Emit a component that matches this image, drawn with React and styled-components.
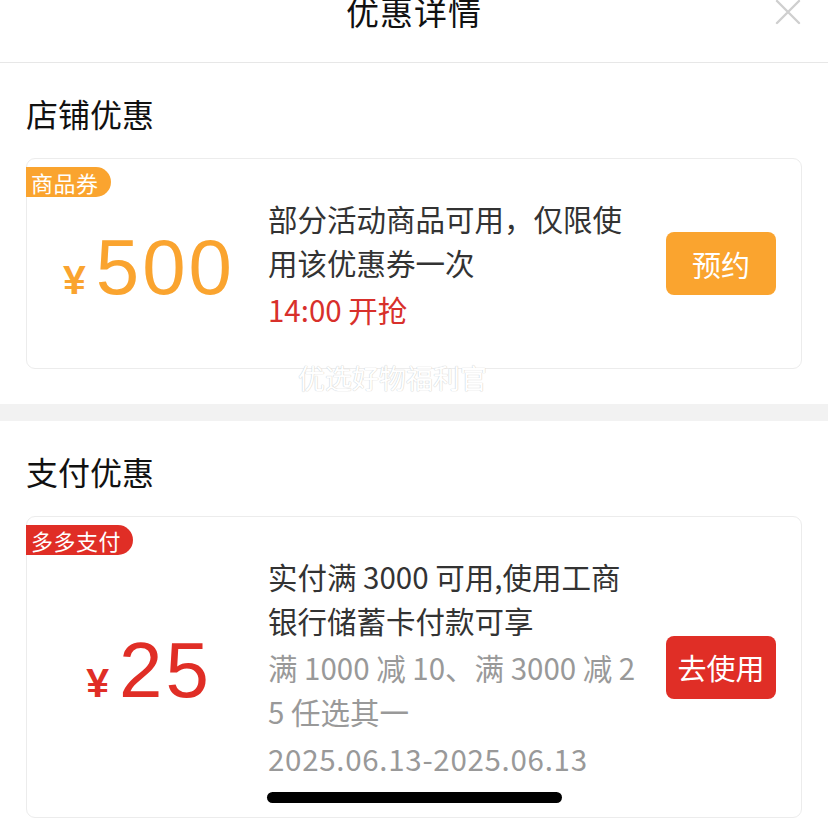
import React from "react";
import styled, { createGlobalStyle } from "styled-components";

const GlobalStyle = createGlobalStyle`
  html, body {
    margin: 0;
    padding: 0;
    background: #fff;
  }
  body {
    font-family: "Noto Sans CJK SC", "Noto Sans", sans-serif;
    color: #222;
    overflow: hidden;
  }
`;

const coupons = [
  {
    id: "shop",
    title: "店铺优惠",
    tag: "商品券",
    color: "#faa42f",
    amount: "500",
    desc: "部分活动商品可用，仅限使用该优惠券一次",
    note: "14:00 开抢",
    action: "预约",
  },
  {
    id: "pay",
    title: "支付优惠",
    tag: "多多支付",
    color: "#e02e26",
    amount: "25",
    desc: "实付满 3000 可用,使用工商银行储蓄卡付款可享",
    rule: "满 1000 减 10、满 3000 减 25 任选其一",
    date: "2025.06.13-2025.06.13",
    action: "去使用",
  },
];

export default function App() {
  return (
    <Page>
      <GlobalStyle />
      <Header>
        <span />
        <Title>优惠详情</Title>
        <Close aria-label="关闭">
          <svg width="26" height="26" viewBox="0 0 26 26">
            <path d="M2 2 L24 24 M24 2 L2 24" stroke="#cfcfcf" strokeWidth="2.4" strokeLinecap="round" />
          </svg>
        </Close>
      </Header>

      {coupons.map((c, i) => (
        <React.Fragment key={c.id}>
          {i > 0 && <Band />}
          <Section>
            <SectionTitle>{c.title}</SectionTitle>
            <Card>
              <Tag $color={c.color}>{c.tag}</Tag>
              <Price $color={c.color}>
                <Yen>¥</Yen>
                <Amount>{c.amount}</Amount>
              </Price>
              <Info>
                <Desc>{c.desc}</Desc>
                {c.note && <Note>{c.note}</Note>}
                {c.rule && <Muted>{c.rule}</Muted>}
                {c.date && <DateText>{c.date}</DateText>}
              </Info>
              <ActionButton $color={c.color}>{c.action}</ActionButton>
            </Card>
            {i === 0 && <Watermark>优选好物福利官</Watermark>}
          </Section>
        </React.Fragment>
      ))}

      <HomeIndicator />
    </Page>
  );
}

const Page = styled.div`
  width: 828px;
  height: 820px;
  position: relative;
  overflow: hidden;
`;

const Header = styled.header`
  height: 62px;
  display: grid;
  grid-template-columns: 1fr auto 1fr;
  align-items: start;
  border-bottom: 1px solid #e7e7e7;
`;

const Title = styled.h1`
  margin: 0;
  font-size: 33px;
  font-weight: 400;
  line-height: 22px;
  color: #111;
  letter-spacing: 1px;
`;

const Close = styled.div`
  justify-self: end;
  margin-right: 27px;
  margin-top: -1px;
  display: flex;
`;

const Section = styled.section`
  position: relative;
  padding: 27px 26px 35px;
`;

const SectionTitle = styled.h2`
  margin: 0 0 22px;
  font-size: 32px;
  font-weight: 400;
  line-height: 46px;
  color: #111;
`;

const Band = styled.div`
  height: 17px;
  background: #f2f2f2;
`;

const Card = styled.div`
  position: relative;
  display: grid;
  grid-template-columns: 241px 368px 110px;
  justify-content: start;
  align-items: center;
  padding: 37px 0;
  border: 1px solid #ececec;
  border-radius: 9px;
`;

const Tag = styled.span`
  position: absolute;
  top: 8px;
  left: -1px;
  height: 30px;
  padding: 0 12px 0 5px;
  border-radius: 0 15px 15px 0;
  background: ${(p) => p.$color};
  color: #fff;
  font-size: 22px;
  line-height: 30px;
  letter-spacing: 0.5px;
`;

const Price = styled.div`
  display: flex;
  align-items: baseline;
  justify-content: center;
  gap: 10px;
  color: ${(p) => p.$color};
  font-family: "Liberation Sans", Arial, sans-serif;
  padding-top: 6px;
`;

const Yen = styled.span`
  font-size: 41px;
  font-weight: 700;
`;

const Amount = styled.span`
  font-size: 78px;
  line-height: 1;
  letter-spacing: 3px;
  margin-right: -3px;
`;

const Info = styled.div`
  display: flex;
  flex-direction: column;
  gap: 3px;
  font-size: 29.5px;
  line-height: 44px;
  word-break: break-all;
`;

const Desc = styled.div`
  color: #333;
`;

const Note = styled.div`
  color: #d8302b;
`;

const Muted = styled.div`
  color: #999;
`;

const DateText = styled(Muted)`
  letter-spacing: 0.7px;
`;

const ActionButton = styled.button`
  width: 110px;
  height: 63px;
  margin-left: 30px;
  border: none;
  border-radius: 8px;
  background: ${(p) => p.$color};
  color: #fff;
  font-family: "Noto Sans CJK SC", sans-serif;
  font-size: 29px;
  padding: 0;
`;

const Watermark = styled.div`
  position: absolute;
  left: 298px;
  bottom: 12px;
  font-size: 27px;
  line-height: 28px;
  color: #fff;
  text-shadow: 0 0 1px #c8c8c8, 0 0 1px #d8d8d8;
`;

const HomeIndicator = styled.div`
  position: absolute;
  left: 267px;
  bottom: 17px;
  width: 295px;
  height: 11px;
  border-radius: 6px;
  background: #000;
`;
